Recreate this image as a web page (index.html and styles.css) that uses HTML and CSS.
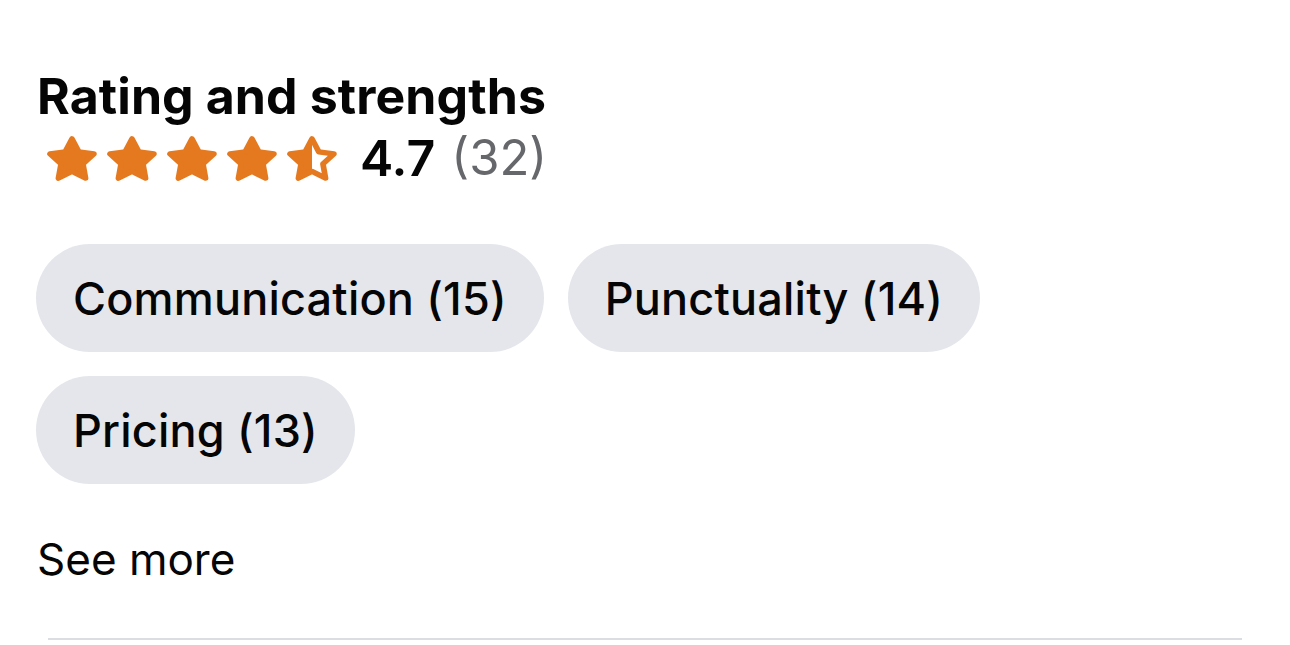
FILE: index.html
```html
<!DOCTYPE html>
<html lang="en">
<head>
<meta charset="utf-8">
<title>Rating and strengths</title>
<link rel="stylesheet" href="styles.css">
</head>
<body>
<section class="panel">
  <h2 class="title">Rating and strengths</h2>
  <div class="rating">
    <div class="stars">
      <svg class="star" viewBox="0.6 0.6 22.8 21.8" preserveAspectRatio="none"><polygon points="12,2 15.09,8.26 22,9.27 17,14.14 18.18,21.02 12,17.77 5.82,21.02 7,14.14 2,9.27 8.91,8.26" fill="#e5791f" stroke="#e5791f" stroke-width="2.6" stroke-linejoin="round"/></svg>
      <svg class="star" viewBox="0.6 0.6 22.8 21.8" preserveAspectRatio="none"><polygon points="12,2 15.09,8.26 22,9.27 17,14.14 18.18,21.02 12,17.77 5.82,21.02 7,14.14 2,9.27 8.91,8.26" fill="#e5791f" stroke="#e5791f" stroke-width="2.6" stroke-linejoin="round"/></svg>
      <svg class="star" viewBox="0.6 0.6 22.8 21.8" preserveAspectRatio="none"><polygon points="12,2 15.09,8.26 22,9.27 17,14.14 18.18,21.02 12,17.77 5.82,21.02 7,14.14 2,9.27 8.91,8.26" fill="#e5791f" stroke="#e5791f" stroke-width="2.6" stroke-linejoin="round"/></svg>
      <svg class="star" viewBox="0.6 0.6 22.8 21.8" preserveAspectRatio="none"><polygon points="12,2 15.09,8.26 22,9.27 17,14.14 18.18,21.02 12,17.77 5.82,21.02 7,14.14 2,9.27 8.91,8.26" fill="#e5791f" stroke="#e5791f" stroke-width="2.6" stroke-linejoin="round"/></svg>
      <svg class="star" viewBox="0.6 0.6 22.8 21.8" preserveAspectRatio="none">
        <defs><linearGradient id="half" x1="0" x2="1" y1="0" y2="0"><stop offset="0.5" stop-color="#e5791f"/><stop offset="0.5" stop-color="#ffffff"/></linearGradient></defs>
        <polygon points="12,2 15.09,8.26 22,9.27 17,14.14 18.18,21.02 12,17.77 5.82,21.02 7,14.14 2,9.27 8.91,8.26" fill="url(#half)" stroke="#e5791f" stroke-width="2.6" stroke-linejoin="round"/>
      </svg>
    </div>
    <span class="score">4.7</span>
    <span class="count">(32)</span>
  </div>
  <div class="chips">
    <span class="chip">Communication (15)</span>
    <span class="chip">Punctuality (14)</span>
    <span class="chip">Pricing (13)</span>
  </div>
  <a class="see-more" href="#">See more</a>
  <hr class="divider">
</section>
</body>
</html>
```

FILE: styles.css
```css
html, body {
  margin: 0;
  padding: 0;
  background: #ffffff;
}

body {
  font-family: Inter, "Noto Sans", "Liberation Sans", sans-serif;
  color: #050505;
}

.panel {
  padding: 66px 48px 0 36px;
  display: flex;
  flex-direction: column;
  align-items: flex-start;
}

.title {
  margin: 0 0 0 1px;
  font-size: 50px;
  font-weight: 700;
  line-height: 60px;
  letter-spacing: 0.1px;
}

.rating {
  display: flex;
  align-items: center;
  margin-top: 6px;
  height: 52px;
}

.stars {
  display: flex;
  gap: 10px;
  padding-left: 11px;
  margin-right: 23px;
}

.star {
  width: 50px;
  height: 45px;
  display: block;
}

.score {
  font-size: 50px;
  font-weight: 600;
  line-height: 52px;
  margin-right: 16px;
}

.count {
  font-size: 49px;
  font-weight: 400;
  line-height: 52px;
  color: #65676b;
}

.chips {
  display: flex;
  flex-wrap: wrap;
  gap: 24px;
  margin-top: 60px;
  width: 1000px;
}

.chip {
  display: inline-flex;
  align-items: center;
  height: 108px;
  padding: 0 37px;
  border-radius: 54px;
  background: #e4e6eb;
  font-size: 45px;
  font-weight: 500;
  letter-spacing: 0.2px;
}

.see-more {
  margin-top: 49px;
  margin-left: 1px;
  font-size: 44px;
  font-weight: 400;
  line-height: 52px;
  color: #050505;
  text-decoration: none;
}

.divider {
  align-self: stretch;
  margin: 53px 0 0 12px;
  border: 0;
  height: 2px;
  background: #dadde1;
}
```
